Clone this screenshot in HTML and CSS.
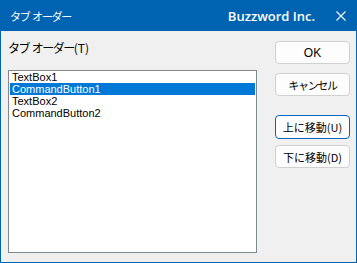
FILE: index.html
```html
<!DOCTYPE html>
<html lang="ja">
<head>
<meta charset="utf-8">
<title>タブ オーダー</title>
<link rel="stylesheet" href="styles.css">
</head>
<body>
<div class="window">
  <div class="titlebar">
    <span class="title">タブ オーダー</span>
    <span class="brand">Buzzword Inc.</span>
    <svg class="close" width="10" height="10" viewBox="0 0 10 10"><path d="M0.5 0.5 L9.5 9.5 M9.5 0.5 L0.5 9.5" stroke="#ffffff" stroke-width="1.1" fill="none"/></svg>
  </div>
  <div class="content">
    <div class="left">
      <div class="label"><span class="kana">タブ オーダー</span>(T)</div>
      <ul class="list">
        <li class="item">TextBox1</li>
        <li class="item selected">CommandButton1</li>
        <li class="item">TextBox2</li>
        <li class="item">CommandButton2</li>
      </ul>
    </div>
    <div class="right">
      <button class="btn btn-ok">OK</button>
      <button class="btn btn-cancel"><span class="kana-btn">キャンセル</span></button>
      <button class="btn btn-up focused">上に移動(U)</button>
      <button class="btn btn-down">下に移動(D)</button>
    </div>
  </div>
</div>
</body>
</html>
```
FILE: styles.css
```css
html, body {
  margin: 0;
  padding: 0;
  background: #f0f0f0;
}
.window {
  width: 357px;
  height: 263px;
  box-sizing: border-box;
  border: 1px solid #0063b1;
  border-top: 0;
  background: #f0f0f0;
  display: flex;
  flex-direction: column;
  font-family: "Noto Sans CJK JP", "Liberation Sans", sans-serif;
  font-size: 12px;
  color: #000;
}
.titlebar {
  height: 31px;
  flex: none;
  background: #0063b1;
  color: #fff;
  display: flex;
  align-items: center;
  padding: 0 10px 0 9px;
  box-sizing: border-box;
}
.title {
  font-size: 11px;
  letter-spacing: -1.3px;
  word-spacing: 1.5px;
  line-height: 16px;
}
.brand {
  margin-left: auto;
  font-family: "Open Sans", "Noto Sans", sans-serif;
  font-weight: 600;
  font-size: 13px;
  line-height: 16px;
}
.close {
  margin-left: 21px;
  display: block;
}
.content {
  flex: 1;
  display: flex;
  padding: 0 0 0 7px;
}
.left {
  width: 249px;
  display: flex;
  flex-direction: column;
}
.label {
  margin-top: 9px;
  line-height: 16px;
  height: 16px;
}
.kana {
  letter-spacing: -1.5px;
  word-spacing: 1.5px;
}
.list {
  margin: 14px 0 0 0;
  padding: 0 1px;
  list-style: none;
  height: 183px;
  box-sizing: border-box;
  border: 1px solid #828790;
  background: #fff;
}
.item {
  height: 12px;
  line-height: 12px;
  padding-left: 2px;
  white-space: nowrap;
  font-family: "Liberation Sans", sans-serif;
  font-size: 11px;
}
.item.selected {
  background: #0078d7;
  color: #fff;
}
.right {
  margin-left: 18px;
  display: flex;
  flex-direction: column;
  width: 75px;
}
.btn {
  width: 75px;
  height: 23px;
  box-sizing: border-box;
  border: 1px solid #d0d0d0;
  border-radius: 4px;
  background: #fdfdfd;
  font-family: "Noto Sans CJK JP", "Liberation Sans", sans-serif;
  font-size: 11px;
  line-height: 16px;
  color: #000;
  padding: 0;
}
.btn-ok {
  margin-top: 10px;
  font-family: "Liberation Sans", sans-serif;
  font-size: 12px;
}
.btn-cancel { margin-top: 9px; }
.kana-btn {
  letter-spacing: -1.3px;
}
.btn-up { margin-top: 19px; height: 24px; }
.btn-down { margin-top: 6px; }
.btn.focused {
  border-color: #0067c0;
}
```
